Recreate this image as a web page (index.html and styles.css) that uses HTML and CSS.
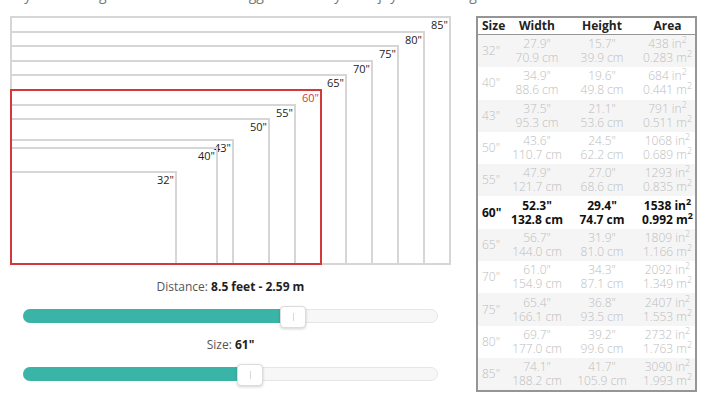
FILE: index.html
```html
<!DOCTYPE html>
<html>
<head>
<meta charset="utf-8">
<link rel="stylesheet" href="styles.css">
</head>
<body>
<div class="page">
  <div class="left">
    <p class="intro">Set your viewing distance to see the biggest screen you enjoy at that range.</p>
    <div class="diagram">
      <div class="box" style="width:441px;height:249px"><span class="lbl">85"</span></div>
      <div class="box" style="width:415px;height:234px"><span class="lbl">80"</span></div>
      <div class="box" style="width:389px;height:220px"><span class="lbl">75"</span></div>
      <div class="box" style="width:363px;height:205px"><span class="lbl">70"</span></div>
      <div class="box" style="width:337px;height:191px"><span class="lbl">65"</span></div>
      <div class="box" style="width:286px;height:161px"><span class="lbl">55"</span></div>
      <div class="box" style="width:260px;height:147px"><span class="lbl">50"</span></div>
      <div class="box" style="width:224px;height:126px"><span class="lbl">43"</span></div>
      <div class="box" style="width:208px;height:118px"><span class="lbl">40"</span></div>
      <div class="box" style="width:167px;height:94px"><span class="lbl">32"</span></div>
      <div class="box active" style="width:312px;height:176px"><span class="lbl">60"</span></div>
    </div>
    <div class="control">
      <div class="caption">Distance: <b>8.5 feet - 2.59 m</b></div>
      <div class="track"><div class="fill" style="width:262px"></div><div class="handle" style="left:256px"></div></div>
    </div>
    <div class="control">
      <div class="caption">Size: <b>61"</b></div>
      <div class="track"><div class="fill" style="width:220px"></div><div class="handle" style="left:213px"></div></div>
    </div>
  </div>
  <div class="table">
    <div class="row head"><div class="c1">Size</div><div>Width</div><div>Height</div><div>Area</div></div>
    <div class="row odd"><div class="c1">32"</div><div>27.9"<br>70.9 cm</div><div>15.7"<br>39.9 cm</div><div>438 in<sup>2</sup><br>0.283 m<sup>2</sup></div></div>
    <div class="row"><div class="c1">40"</div><div>34.9"<br>88.6 cm</div><div>19.6"<br>49.8 cm</div><div>684 in<sup>2</sup><br>0.441 m<sup>2</sup></div></div>
    <div class="row odd"><div class="c1">43"</div><div>37.5"<br>95.3 cm</div><div>21.1"<br>53.6 cm</div><div>791 in<sup>2</sup><br>0.511 m<sup>2</sup></div></div>
    <div class="row"><div class="c1">50"</div><div>43.6"<br>110.7 cm</div><div>24.5"<br>62.2 cm</div><div>1068 in<sup>2</sup><br>0.689 m<sup>2</sup></div></div>
    <div class="row odd"><div class="c1">55"</div><div>47.9"<br>121.7 cm</div><div>27.0"<br>68.6 cm</div><div>1293 in<sup>2</sup><br>0.835 m<sup>2</sup></div></div>
    <div class="row sel"><div class="c1">60"</div><div>52.3"<br>132.8 cm</div><div>29.4"<br>74.7 cm</div><div>1538 in<sup>2</sup><br>0.992 m<sup>2</sup></div></div>
    <div class="row odd"><div class="c1">65"</div><div>56.7"<br>144.0 cm</div><div>31.9"<br>81.0 cm</div><div>1809 in<sup>2</sup><br>1.166 m<sup>2</sup></div></div>
    <div class="row"><div class="c1">70"</div><div>61.0"<br>154.9 cm</div><div>34.3"<br>87.1 cm</div><div>2092 in<sup>2</sup><br>1.349 m<sup>2</sup></div></div>
    <div class="row odd"><div class="c1">75"</div><div>65.4"<br>166.1 cm</div><div>36.8"<br>93.5 cm</div><div>2407 in<sup>2</sup><br>1.553 m<sup>2</sup></div></div>
    <div class="row"><div class="c1">80"</div><div>69.7"<br>177.0 cm</div><div>39.2"<br>99.6 cm</div><div>2732 in<sup>2</sup><br>1.763 m<sup>2</sup></div></div>
    <div class="row odd"><div class="c1">85"</div><div>74.1"<br>188.2 cm</div><div>41.7"<br>105.9 cm</div><div>3090 in<sup>2</sup><br>1.993 m<sup>2</sup></div></div>
  </div>
</div>
</body>
</html>
```

FILE: styles.css
```css
html, body {
  margin: 0;
  padding: 0;
  background: #fff;
  overflow: hidden;
}
body {
  font-family: "Open Sans", "DejaVu Sans", sans-serif;
  color: #333;
}
.page {
  display: flex;
  align-items: flex-start;
  width: 720px;
  height: 410px;
  overflow: hidden;
}
.left {
  width: 460px;
  display: flex;
  flex-direction: column;
}
.intro {
  margin: -14px 0 0 0;
  height: 18px;
  line-height: 18px;
  font-size: 14px;
  color: #777;
  text-align: center;
  white-space: nowrap;
}
.diagram {
  position: relative;
  width: 441px;
  height: 249px;
  margin: 12px 0 0 10px;
}
.box {
  position: absolute;
  left: 0;
  bottom: 0;
  box-sizing: border-box;
  border: 2px solid #d6d6d6;
}
.box.active {
  border-color: #d2393b;
}
.lbl {
  position: absolute;
  right: 1px;
  top: 0;
  font-size: 11px;
  line-height: 14px;
  color: #222;
}
.active .lbl {
  color: #d2393b;
}
.control {
  display: flex;
  flex-direction: column;
  align-items: center;
  width: 415px;
  margin-left: 23px;
}
.caption {
  font-size: 12px;
  line-height: 18px;
  color: #555;
  margin-top: 13px;
}
.caption b {
  color: #222;
  font-weight: 700;
}
.track {
  position: relative;
  width: 415px;
  height: 14px;
  margin-top: 13px;
  box-sizing: border-box;
  border: 1px solid #e6e6e6;
  border-radius: 7px;
  background: #f7f7f7;
}
.fill {
  position: absolute;
  left: -1px;
  top: -1px;
  bottom: -1px;
  background: #3bb4a8;
  border-radius: 7px 0 0 7px;
}
.handle {
  position: absolute;
  top: -4px;
  width: 26px;
  height: 22px;
  box-sizing: border-box;
  background: #fff;
  border: 1px solid #dcdcdc;
  border-radius: 4px;
  box-shadow: 0 1px 3px rgba(0,0,0,0.18);
}
.handle::after {
  content: "";
  position: absolute;
  left: 12px;
  top: 6px;
  width: 1px;
  height: 8px;
  background: #d8d8d8;
}
.table {
  margin: 16px 0 0 16px;
  width: 221px;
  box-sizing: border-box;
  border: 2px solid #959595;
}
.row {
  display: grid;
  grid-template-columns: 32px 54px 76px 55px;
  align-items: center;
  height: 32.3px;
  font-size: 12px;
  line-height: 14px;
  font-weight: 300;
  color: #bdbdbd;
  text-align: center;
}
.row.odd {
  background: #f5f5f5;
}
.row .c1 {
  text-align: left;
  padding-left: 4px;
}
.row.head {
  height: 16px;
  border-bottom: 1px solid #959595;
  font-weight: 700;
  color: #222;
  font-size: 12px;
  line-height: 16px;
}
.row.sel {
  font-weight: 700;
  color: #111;
}
sup {
  font-size: 9px;
  line-height: 0;
  vertical-align: 5px;
}
```
